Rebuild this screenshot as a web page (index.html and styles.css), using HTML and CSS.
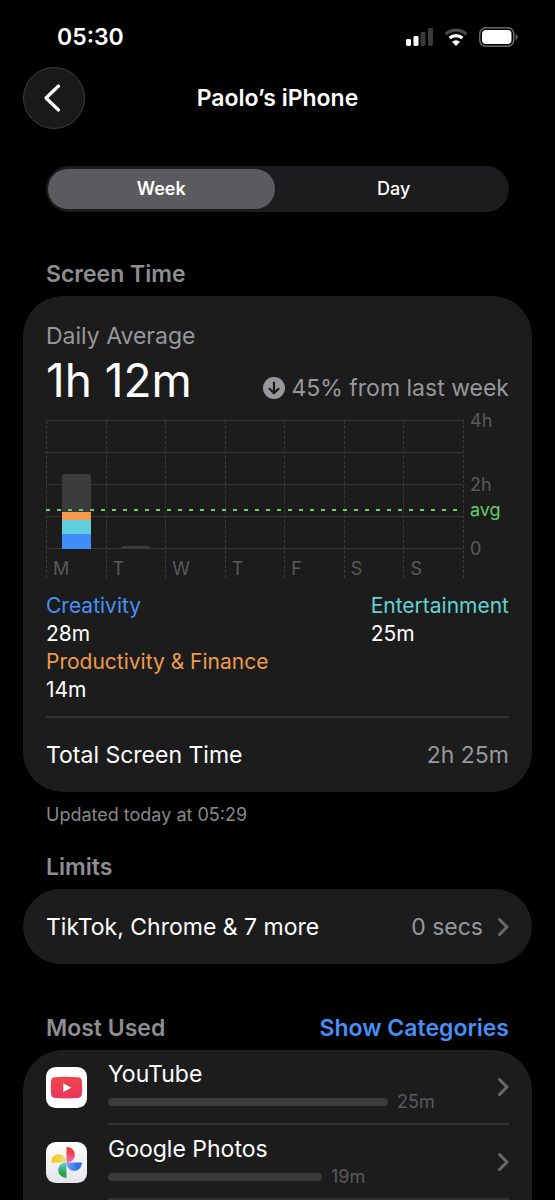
FILE: index.html
```html
<!DOCTYPE html>
<html lang="en">
<head>
<meta charset="utf-8">
<meta name="viewport" content="width=device-width, initial-scale=1">
<title>Screen Time</title>
<link rel="stylesheet" href="styles.css">
</head>
<body>
<div class="screen">
  <div class="status-bar">
    <time class="clock">05:30</time>
    <div class="status-icons">
      <svg width="27" height="18" viewBox="0 0 27 18" aria-hidden="true">
        <rect x="0" y="11" width="5" height="7" rx="1.4" fill="#fff"/>
        <rect x="7.5" y="8" width="5" height="10" rx="1.4" fill="#fff"/>
        <rect x="14.5" y="4" width="5" height="14" rx="1.4" fill="#3a3a3a"/>
        <rect x="22" y="0" width="5" height="18" rx="1.4" fill="#3a3a3a"/>
      </svg>
      <svg width="24" height="18" viewBox="0 0 24 18" fill="none" aria-hidden="true">
        <path d="M1.8 6.3a14.6 14.6 0 0 1 20.4 0" stroke="#4a4a4a" stroke-width="3.2"/>
        <path d="M5.6 10.2a9.3 9.3 0 0 1 12.8 0" stroke="#fff" stroke-width="3.2"/>
        <path d="M12 18l-4-4.2a5.8 5.8 0 0 1 8 0z" fill="#fff"/>
      </svg>
      <svg width="39" height="20" viewBox="0 0 39 20" aria-hidden="true">
        <rect x="0.75" y="0.75" width="34" height="18.5" rx="6" fill="none" stroke="#6a6a6a" stroke-width="1.5"/>
        <rect x="3" y="3" width="29.5" height="14" rx="4" fill="#fff"/>
        <path d="M36.6 7v6c1.3-.5 2-1.700 2-3s-.7-2.500-2-3z" fill="#6a6a6a"/>
      </svg>
    </div>
  </div>

  <header class="nav">
    <button class="back" type="button" aria-label="Back">
      <svg width="18" height="30" viewBox="0 0 18 30" fill="none" aria-hidden="true"><path d="M15.500 3L3 15L15.500 27" stroke="#fff" stroke-width="3.2" stroke-linecap="round" stroke-linejoin="round"/></svg>
    </button>
    <h1 class="title">Paolo’s iPhone</h1>
  </header>

  <div class="segmented">
    <button class="segment selected" type="button" aria-pressed="true">Week</button>
    <button class="segment" type="button" aria-pressed="false">Day</button>
  </div>

  <main>
    <section>
      <h2 class="heading">Screen Time</h2>
      <div class="card usage">
        <p class="label">Daily Average</p>
        <div class="summary">
          <p class="average">1h 12m</p>
          <p class="change">
            <svg width="22" height="22" viewBox="0 0 22 22" aria-hidden="true"><circle cx="11" cy="11" r="11" fill="#97979c"/><path d="M11 5.500v10.500M6.500 11.800L11 16.200L15.500 11.800" fill="none" stroke="#1c1c1c" stroke-width="2.200" stroke-linecap="round" stroke-linejoin="round"/></svg>
            <span>45% from last week</span>
          </p>
        </div>

        <div class="chart">
          <div class="plot">
            <div class="gridlines"><i></i><i></i><i></i><i></i></div>
            <div class="day">
              <div class="column"><div class="bar">
                <span class="other" style="height:38px"></span>
                <span class="productivity" style="height:8px"></span>
                <span class="entertainment" style="height:14px"></span>
                <span class="creativity" style="height:15px"></span>
              </div></div>
              <span class="day-name">M</span>
            </div>
            <div class="day"><div class="column"><div class="bar"><span class="other" style="height:3px"></span></div></div><span class="day-name">T</span></div>
            <div class="day"><div class="column"></div><span class="day-name">W</span></div>
            <div class="day"><div class="column"></div><span class="day-name">T</span></div>
            <div class="day"><div class="column"></div><span class="day-name">F</span></div>
            <div class="day"><div class="column"></div><span class="day-name">S</span></div>
            <div class="day"><div class="column"></div><span class="day-name">S</span></div>
            <div class="average-line"></div>
          </div>
          <div class="axis">
            <span class="tick four">4h</span>
            <span class="tick two">2h</span>
            <span class="tick avg">avg</span>
            <span class="tick zero">0</span>
          </div>
        </div>

        <dl class="legend">
          <div><dt class="blue">Creativity</dt><dd>28m</dd></div>
          <div><dt class="teal">Entertainment</dt><dd>25m</dd></div>
          <div><dt class="orange">Productivity &amp; Finance</dt><dd>14m</dd></div>
        </dl>
        <div class="total"><span>Total Screen Time</span><span class="value">2h 25m</span></div>
      </div>
      <p class="footnote">Updated today at 05:29</p>
    </section>

    <section>
      <h2 class="heading">Limits</h2>
      <a class="card limit" href="#limits">
        <span class="limit-name">TikTok, Chrome &amp; 7 more</span>
        <span class="value">0 secs</span>
        <svg class="chevron" width="12" height="20" viewBox="0 0 12 20" aria-hidden="true"><path d="M2.500 2.500L10 10L2.500 17.500"/></svg>
      </a>
    </section>

    <section class="most-used">
      <div class="heading-row">
        <h2 class="heading">Most Used</h2>
        <button class="link" type="button">Show Categories</button>
      </div>
      <div class="card apps">
        <a class="app" href="#youtube">
          <svg class="app-icon" viewBox="0 0 42 42" aria-hidden="true">
            <defs><linearGradient id="red" x1="0" y1="0" x2="0" y2="1"><stop offset="0" stop-color="#f2454a"/><stop offset="1" stop-color="#e93660"/></linearGradient></defs>
            <rect width="42" height="42" rx="10" fill="#fff"/>
            <path d="M9 10.500Q21 9.600 33 10.500Q36.500 10.800 36.800 14.500Q37.300 21 36.800 27.500Q36.500 31.500 33 31.800Q21 32.700 9 31.800Q5.500 31.500 5.200 27.500Q4.700 21 5.200 14.500Q5.500 10.800 9 10.500z" fill="url(#red)"/>
            <path d="M17.700 16.700v9L26 21.200z" fill="#fff"/>
          </svg>
          <div class="app-body">
            <div class="app-info">
              <span class="app-name">YouTube</span>
              <span class="app-usage"><span class="meter" style="width:72%"></span>25m</span>
            </div>
            <svg class="chevron" width="12" height="20" viewBox="0 0 12 20" aria-hidden="true"><path d="M2.500 2.500L10 10L2.500 17.500"/></svg>
          </div>
        </a>
        <a class="app" href="#google-photos">
          <svg class="app-icon" viewBox="0 0 42 42" aria-hidden="true">
            <defs>
              <linearGradient id="paper" x1="0" y1="0" x2="0" y2="1"><stop offset="0" stop-color="#fff"/><stop offset="1" stop-color="#e4e5e8"/></linearGradient>
              <linearGradient id="pr" x1="0" y1="0" x2="0" y2="1"><stop offset="0.3" stop-color="#e9413c"/><stop offset="1" stop-color="#f26fb6"/></linearGradient>
              <linearGradient id="pb" x1="0" y1="0" x2="1" y2="0"><stop offset="0" stop-color="#7fa7f5"/><stop offset="0.700" stop-color="#316fe7"/></linearGradient>
              <linearGradient id="pg" x1="0" y1="1" x2="0" y2="0"><stop offset="0.300" stop-color="#27a555"/><stop offset="1" stop-color="#6fc7d4"/></linearGradient>
              <linearGradient id="py" x1="0" y1="0" x2="1" y2="0"><stop offset="0.300" stop-color="#fbcc20"/><stop offset="1" stop-color="#dce59a"/></linearGradient>
            </defs>
            <rect width="42" height="42" rx="10" fill="url(#paper)"/>
            <path d="M21 5.200c5 0 8.500 3.500 8.500 8s-3.500 7.800-8.500 7.800z" fill="url(#pr)"/>
            <path d="M36.800 21c0 5-3.500 8.500-8 8.500S21 26 21 21z" fill="url(#pb)"/>
            <path d="M21 36.800c-5 0-8.500-3.500-8.500-8S16 21 21 21z" fill="url(#pg)"/>
            <path d="M5.200 21c0-5 3.500-8.500 8-8.500S21 16 21 21z" fill="url(#py)"/>
          </svg>
          <div class="app-body">
            <div class="app-info">
              <span class="app-name">Google Photos</span>
              <span class="app-usage"><span class="meter" style="width:55%"></span>19m</span>
            </div>
            <svg class="chevron" width="12" height="20" viewBox="0 0 12 20" aria-hidden="true"><path d="M2.500 2.500L10 10L2.500 17.500"/></svg>
          </div>
        </a>
      </div>
    </section>
  </main>
</div>
</body>
</html>
```
FILE: styles.css
```css
* { box-sizing: border-box; }
body {
  margin: 0;
  background: #000;
  color: #fff;
  font-family: Inter, "Liberation Sans", sans-serif;
  font-size: 23px;
  line-height: 28px;
}
h1, h2, p, dl, dd { margin: 0; }
button { border: 0; padding: 0; background: none; color: inherit; font: inherit; cursor: pointer; }
a { color: inherit; text-decoration: none; }
svg { display: block; flex: none; }

.screen { height: 100vh; overflow: hidden; padding: 0 23px; }

.status-bar { display: flex; justify-content: space-between; align-items: center; height: 67px; padding: 7px 14px 0 34px; }
.clock { font-size: 23px; font-weight: 600; }
.status-icons { display: flex; align-items: center; gap: 11px; }

.nav { display: grid; grid-template-columns: 62px 1fr 62px; align-items: center; }
.back { display: grid; place-items: center; height: 62px; padding-right: 4px; border: 1px solid #3b3b3b; border-radius: 50%; background: #191919; }
.title { font-size: 23px; font-weight: 600; text-align: center; }

.segmented { display: grid; grid-template-columns: 1fr 1fr; gap: 6px; margin: 37px 23px 0; padding: 3px 2px; border-radius: 23px; background: #1c1c1e; }
.segment { height: 40px; border-radius: 20px; font-size: 18px; font-weight: 500; }
.selected { background: #5b5a5f; font-weight: 600; }

main { padding-top: 47px; }
.heading { padding: 0 23px; font-size: 23px; font-weight: 600; color: #8d8d92; line-height: 30px; }
.card { border-radius: 40px; background: #1c1c1c; padding: 0 23px; }

.usage { margin-top: 7px; padding-top: 26px; }
.label { color: #97979c; }
.summary { display: flex; justify-content: space-between; align-items: flex-end; height: 64px; }
.average { font-size: 46px; line-height: 60px; align-self: flex-start; }
.change { display: flex; align-items: center; gap: 6px; padding-bottom: 12px; color: #97979c; }
.value { color: #97979c; }

.chart { display: grid; grid-template-columns: 1fr 45px; margin-top: 6px; }
.plot { position: relative; display: grid; grid-template-columns: repeat(7, 1fr); border-right: 1px dashed #3a3a3a; border-top: 1px solid #363636; }
.gridlines { position: absolute; top: 0; left: 0; right: 0; }
.gridlines i { display: block; height: 32px; border-bottom: 1px solid #363636; }
.day { border-left: 1px dashed #3a3a3a; }
.column { position: relative; display: flex; justify-content: center; align-items: flex-end; height: 128px; }
.bar { width: 50%; border-radius: 2px 2px 0 0; overflow: hidden; }
.bar span { display: block; }
.other { background: #3b3b3b; }
.productivity { background: #f59a4a; }
.entertainment { background: #60cfdd; }
.creativity { background: #3f8efa; }
.day-name { display: block; height: 29px; padding: 8px 0 0 6px; font-size: 18px; line-height: 24px; color: #59595c; }
.average-line { position: absolute; top: 88px; left: 0; right: 0; height: 2px; background: repeating-linear-gradient(90deg, #6ccb70 0 4px, transparent 4px 11px); }
.axis { position: relative; font-size: 18px; line-height: 24px; color: #59595c; }
.tick { position: absolute; left: 6px; }
.four { top: -11px; }
.two { top: 53px; }
.avg { top: 78px; color: #67ce67; }
.zero { top: 117px; }

.legend { display: grid; grid-template-columns: 1fr auto; margin-top: 14px; padding-bottom: 12px; border-bottom: 2px solid #323232; font-size: 21px; line-height: 28px; }
.blue { color: #478ff7; }
.teal { color: #65d0d2; }
.orange { color: #ee9a4d; }
.total { display: flex; justify-content: space-between; align-items: center; height: 74px; }
.footnote { padding: 9px 23px 0; margin-bottom: 23px; font-size: 18px; color: #88888c; }

.limit { display: flex; align-items: center; height: 75px; margin-top: 7px; }
.limit-name { flex: 1; }
.chevron { margin-left: 14px; fill: none; stroke: #68686c; stroke-width: 3; stroke-linecap: round; stroke-linejoin: round; }

.most-used { padding-top: 49px; }
.heading-row { display: flex; justify-content: space-between; align-items: center; padding-right: 23px; }
.link { font-size: 23px; line-height: 30px; font-weight: 600; color: #478ff7; }
.apps { margin-top: 7px; padding-bottom: 75px; }
.app { display: grid; grid-template-columns: 41px 1fr; gap: 21px; align-items: center; }
.app-icon { width: 41px; height: 41px; }
.app-body { display: flex; align-items: center; height: 75px; border-bottom: 2px solid #323232; }
.app-info { flex: 1; display: grid; gap: 2px; }
.app-usage { display: flex; align-items: center; gap: 9px; font-size: 18px; line-height: 24px; color: #59595c; }
.meter { height: 8px; border-radius: 4px; background: #3b3b3b; }
.app .chevron { margin-left: 0; }
```
